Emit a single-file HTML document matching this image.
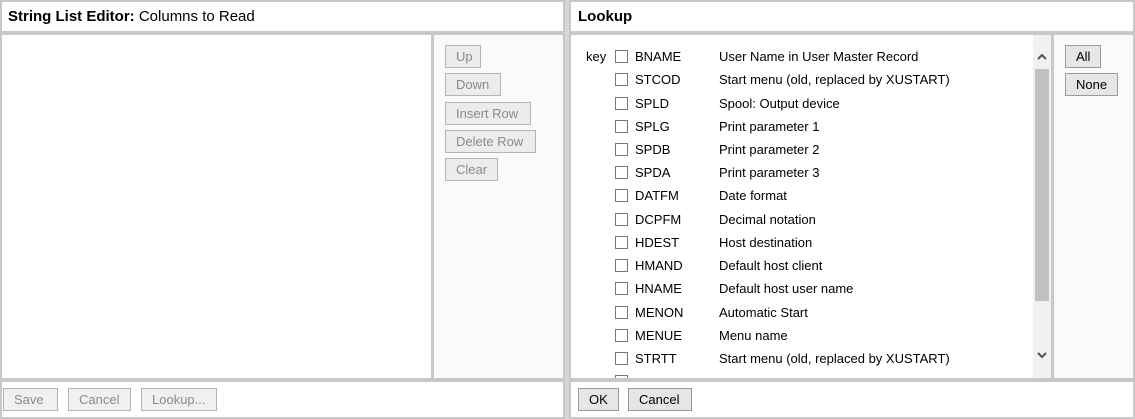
<!DOCTYPE html><html><head><style>
*{box-sizing:border-box;margin:0;padding:0}
body{width:1135px;height:419px;background:#d6d6d6;font-family:"Liberation Sans",Arial,sans-serif;font-size:13px;position:relative;overflow:hidden}
.b{position:absolute;background:#fff;border:2px solid #c8c8c8}
.btn{position:absolute;height:23px;border:1px solid #b4b4b4;background:#ececec;color:#8a8a8a;font-size:13px;line-height:21px;padding:0 10px;white-space:nowrap}
.en{color:#000;border-color:#9a9a9a;background:#e6e6e6}
.r{position:absolute;left:0;white-space:nowrap;height:18px;line-height:18px}
.cb{position:absolute;left:44px;top:2px;width:13px;height:13px;border:1px solid #777;background:#fff}
</style></head><body>
<div class="b" style="left:0;top:0;width:565px;height:33px"><div style="position:absolute;left:6px;top:6px;font-size:15px"><b>String List Editor:</b> Columns to Read</div></div>
<div class="b" style="left:0;top:33px;width:433px;height:347px"></div>
<div class="b" style="left:432px;top:33px;width:133px;height:347px;background:#fafafa"></div>
<div class="btn" style="left:445px;top:45px;width:36px">Up</div>
<div class="btn" style="left:445px;top:73px;width:56px">Down</div>
<div class="btn" style="left:445px;top:102px;width:86px">Insert Row</div>
<div class="btn" style="left:445px;top:130px;width:91px">Delete Row</div>
<div class="btn" style="left:445px;top:158px;width:53px">Clear</div>
<div class="b" style="left:0;top:380px;width:565px;height:39px"></div>
<div class="btn" style="left:3px;top:388px;width:55px;background:#f0f0f0">Save</div>
<div class="btn" style="left:68px;top:388px;width:63px;background:#f0f0f0">Cancel</div>
<div class="btn" style="left:141px;top:388px;width:76px;background:#f0f0f0">Lookup...</div>

<div class="b" style="left:569px;top:0;width:566px;height:33px"><div style="position:absolute;left:7px;top:6px;font-size:15px;font-weight:bold">Lookup</div></div>
<div class="b" style="left:569px;top:33px;width:484px;height:347px;overflow:hidden">
<div style="position:absolute;left:462px;top:0;width:18px;height:343px;background:#f1f1f1"></div>
<div style="position:absolute;left:464px;top:34px;width:14px;height:232px;background:#c1c1c1"></div>
<svg style="position:absolute;left:465px;top:17px" width="12" height="10"><path d="M2 7L6 3L10 7" stroke="#505050" stroke-width="2" fill="none"/></svg>
<svg style="position:absolute;left:465px;top:315px" width="12" height="10"><path d="M2 3L6 7L10 3" stroke="#505050" stroke-width="2" fill="none"/></svg>
<div style="position:absolute;left:0;top:13px;width:460px">
<div class="r" style="top:0"><span style="position:absolute;left:15px">key</span><div class="cb"></div><span style="position:absolute;left:64px">BNAME</span><span style="position:absolute;left:148px">User Name in User Master Record</span></div>
<div class="r" style="top:23.2px"><div class="cb"></div><span style="position:absolute;left:64px">STCOD</span><span style="position:absolute;left:148px">Start menu (old, replaced by XUSTART)</span></div>
<div class="r" style="top:46.5px"><div class="cb"></div><span style="position:absolute;left:64px">SPLD</span><span style="position:absolute;left:148px">Spool: Output device</span></div>
<div class="r" style="top:69.7px"><div class="cb"></div><span style="position:absolute;left:64px">SPLG</span><span style="position:absolute;left:148px">Print parameter 1</span></div>
<div class="r" style="top:92.9px"><div class="cb"></div><span style="position:absolute;left:64px">SPDB</span><span style="position:absolute;left:148px">Print parameter 2</span></div>
<div class="r" style="top:116.2px"><div class="cb"></div><span style="position:absolute;left:64px">SPDA</span><span style="position:absolute;left:148px">Print parameter 3</span></div>
<div class="r" style="top:139.4px"><div class="cb"></div><span style="position:absolute;left:64px">DATFM</span><span style="position:absolute;left:148px">Date format</span></div>
<div class="r" style="top:162.6px"><div class="cb"></div><span style="position:absolute;left:64px">DCPFM</span><span style="position:absolute;left:148px">Decimal notation</span></div>
<div class="r" style="top:185.8px"><div class="cb"></div><span style="position:absolute;left:64px">HDEST</span><span style="position:absolute;left:148px">Host destination</span></div>
<div class="r" style="top:209.1px"><div class="cb"></div><span style="position:absolute;left:64px">HMAND</span><span style="position:absolute;left:148px">Default host client</span></div>
<div class="r" style="top:232.3px"><div class="cb"></div><span style="position:absolute;left:64px">HNAME</span><span style="position:absolute;left:148px">Default host user name</span></div>
<div class="r" style="top:255.5px"><div class="cb"></div><span style="position:absolute;left:64px">MENON</span><span style="position:absolute;left:148px">Automatic Start</span></div>
<div class="r" style="top:278.8px"><div class="cb"></div><span style="position:absolute;left:64px">MENUE</span><span style="position:absolute;left:148px">Menu name</span></div>
<div class="r" style="top:302px"><div class="cb"></div><span style="position:absolute;left:64px">STRTT</span><span style="position:absolute;left:148px">Start menu (old, replaced by XUSTART)</span></div>
<div class="r" style="top:325.2px"><div class="cb"></div></div>
</div></div>
<div class="b" style="left:1052px;top:33px;width:83px;height:347px;background:#fafafa"></div>
<div class="btn en" style="left:1065px;top:45px;width:36px">All</div>
<div class="btn en" style="left:1065px;top:73px;width:53px">None</div>
<div class="b" style="left:569px;top:380px;width:566px;height:39px"></div>
<div class="btn en" style="left:578px;top:388px;width:41px">OK</div>
<div class="btn en" style="left:628px;top:388px;width:64px">Cancel</div>
</body></html>
